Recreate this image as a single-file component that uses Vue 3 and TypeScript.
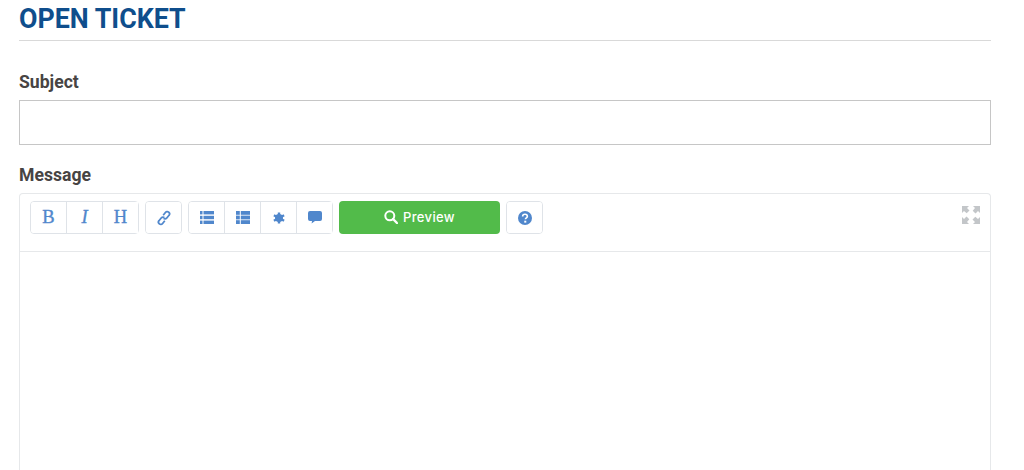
<template>
  <section class="ticket">
    <h1 class="title">OPEN TICKET</h1>

    <label class="field-label subject-label" for="subject">Subject</label>
    <input id="subject" class="subject-input" type="text" />

    <label class="field-label message-label">Message</label>
    <div class="editor">
      <div class="toolbar">
        <div class="btn-group">
          <button class="tool letter">B</button>
          <button class="tool letter italic">I</button>
          <button class="tool letter">H</button>
        </div>
        <div class="btn-group">
          <button class="tool" aria-label="Link">
            <svg width="14" height="16" viewBox="0 0 14 16" fill="none" stroke="#5087cc" stroke-width="1.8">
              <path d="M6.200 5.200 8.600 2.300a2.100 2.100 0 0 1 3-.2l.3.3a2.100 2.100 0 0 1 .1 2.900L9.600 8.200a2.100 2.100 0 0 1-3 .1" />
              <path d="M7.800 10.800 5.400 13.700a2.100 2.100 0 0 1-3 .2l-.3-.3a2.100 2.100 0 0 1-.1-2.900L4.400 7.800a2.100 2.100 0 0 1 3-.1" />
            </svg>
          </button>
        </div>
        <div class="btn-group">
          <button class="tool" aria-label="Bullet list">
            <svg width="14" height="13" viewBox="0 0 14 13" fill="#5087cc">
              <rect y="0" width="2.500" height="3.400" /><rect y="4.800" width="2.500" height="3.400" /><rect y="9.600" width="2.500" height="3.400" />
              <rect x="3.500" y="0" width="10.500" height="3.400" /><rect x="3.500" y="4.800" width="10.500" height="3.400" /><rect x="3.500" y="9.600" width="10.500" height="3.400" />
            </svg>
          </button>
          <button class="tool" aria-label="Numbered list">
            <svg width="14" height="13" viewBox="0 0 14 13" fill="#5087cc">
              <rect y="0" width="3.800" height="3.800" /><rect y="4.600" width="3.800" height="3.800" /><rect y="9.200" width="3.800" height="3.800" />
              <rect x="4.800" y="0" width="9.200" height="3.800" /><rect x="4.800" y="4.600" width="9.200" height="3.800" /><rect x="4.800" y="9.200" width="9.200" height="3.800" />
            </svg>
          </button>
          <button class="tool" aria-label="Code">
            <svg width="12" height="12" viewBox="0 0 12 12" fill="#5087cc">
              <circle cx="6" cy="6" r="4" />
              <g stroke="#5087cc" stroke-width="2.400">
                <path d="M6 .5v11M.9 3.200l10.200 5.600M.9 8.800l10.200-5.600" />
              </g>
            </svg>
          </button>
          <button class="tool" aria-label="Quote">
            <svg width="14" height="13" viewBox="0 0 14 13" fill="#5087cc">
              <path d="M2 0h10a2 2 0 0 1 2 2v6a2 2 0 0 1-2 2H7l-3.400 2.600.4-2.600H2a2 2 0 0 1-2-2V2a2 2 0 0 1 2-2z" />
            </svg>
          </button>
        </div>
        <button class="preview">
          <svg width="14" height="14" viewBox="0 0 14 14" fill="none" stroke="#fff" stroke-width="2">
            <circle cx="5.800" cy="5.800" r="4.500" />
            <path d="M9 9l4 4" stroke-width="2.400" stroke-linecap="round" />
          </svg>
          <span>Preview</span>
        </button>
        <div class="btn-group">
          <button class="tool" aria-label="Help">
            <svg width="14" height="14" viewBox="0 0 13 13">
              <circle cx="6.500" cy="6.500" r="6.500" fill="#5087cc" />
              <path d="M4.300 5a2.200 2 0 0 1 4.400 0c0 1.300-1.800 1.400-1.800 2.600" fill="none" stroke="#fff" stroke-width="1.500" />
              <rect x="5.800" y="9" width="1.900" height="1.800" fill="#fff" />
            </svg>
          </button>
        </div>
        <svg class="fullscreen" width="18" height="18" viewBox="0 0 18 18" fill="#c3c6c9">
          <path d="M0 0h7L5 2l2.500 2.500-2.800 2.800L2 5 0 7z" />
          <path d="M18 0v7l-2-2-2.500 2.500-2.800-2.800L13 2 11 0z" />
          <path d="M0 18v-7l2 2 2.500-2.500 2.800 2.800L5 16l2 2z" />
          <path d="M18 18h-7l2-2-2.500-2.500 2.800-2.800L16 13l2-2z" />
        </svg>
      </div>
      <div class="editor-body"></div>
    </div>
  </section>
</template>

<script setup lang="ts">
</script>

<style>
html, body {
  margin: 0;
  background: #fff;
  overflow: hidden;
}
</style>

<style scoped>
.ticket {
  height: 470px;
  overflow: hidden;
  box-sizing: border-box;
  padding: 0 33px 0 19px;
  font-family: Roboto, "Liberation Sans", sans-serif;
}

.title {
  margin: 0;
  height: 40px;
  line-height: 38px;
  border-bottom: 1px solid #d9d9d9;
  font-size: 26.8px;
  font-weight: 700;
  color: #0f4e8c;
}

.field-label {
  display: block;
  font-size: 17.6px;
  font-weight: 700;
  color: #474443;
  line-height: 20px;
}

.subject-label {
  margin-top: 31px;
}

.subject-input {
  display: block;
  box-sizing: border-box;
  width: 100%;
  height: 45px;
  margin-top: 8px;
  border: 1px solid #c6c6c6;
  background: #fff;
}

.message-label {
  margin-top: 20px;
}

.editor {
  margin-top: 8px;
  border: 1px solid #e6e8ea;
  border-bottom: none;
  border-radius: 4px 4px 0 0;
}

.toolbar {
  display: flex;
  align-items: flex-start;
  gap: 6px;
  height: 58px;
  box-sizing: border-box;
  padding: 7px 10px 0;
  border-bottom: 1px solid #e6e8ea;
}

.btn-group {
  display: flex;
  height: 33px;
  box-sizing: border-box;
  border: 1px solid #dfe3e8;
  border-radius: 4px;
}

.tool {
  display: flex;
  align-items: center;
  justify-content: center;
  width: 35px;
  height: 31px;
  padding: 0;
  border: none;
  background: #fff;
  border-radius: 3px;
}

.tool + .tool {
  width: 36px;
  border-left: 1px solid #dfe3e8;
  border-radius: 0;
}

.letter {
  font-family: "Liberation Serif", serif;
  font-size: 18.5px;
  color: #5087cc;
  -webkit-text-stroke: 0.35px #5087cc;
}

.italic {
  font-style: italic;
}

.preview {
  display: flex;
  align-items: center;
  justify-content: center;
  gap: 5px;
  width: 161px;
  height: 33px;
  padding: 0 0 1px;
  border: none;
  border-radius: 4px;
  background: #52bb4a;
  color: #fff;
  font-family: Inter, sans-serif;
  font-size: 13px;
  font-weight: 500;
  letter-spacing: 0.35px;
}

.fullscreen {
  margin-left: auto;
  margin-top: 5px;
}

.editor-body {
  height: 300px;
}
</style>
